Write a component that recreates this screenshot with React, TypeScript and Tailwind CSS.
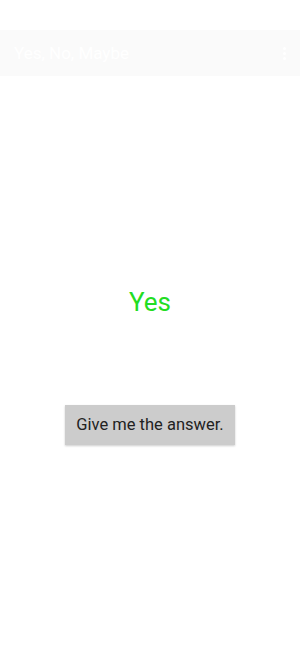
import React from "react";

export default function App() {
  return (
    <div className="w-[300px] h-[650px] bg-white flex flex-col font-['Roboto',sans-serif]">
      {/* status bar space */}
      <div className="h-[30px]" />
      {/* app bar */}
      <div className="h-[46px] bg-[#fafafa] flex items-center justify-between pl-[14px] pr-[14px]">
        <span className="text-white text-[17px] leading-none">Yes, No, Maybe</span>
        <div className="flex flex-col gap-[2px] items-center">
          <span className="w-[3px] h-[3px] rounded-full bg-white" />
          <span className="w-[3px] h-[3px] rounded-full bg-white" />
          <span className="w-[3px] h-[3px] rounded-full bg-white" />
        </div>
      </div>
      <div className="flex flex-col items-center pt-[207px]">
        <span className="text-[26px] leading-[38px] text-[#22dd22]">Yes</span>
        <button className="mt-[84px] w-[170px] h-[40px] bg-[#cccccc] text-[#222222] text-[16.5px] shadow-[0_1px_2px_rgba(0,0,0,0.2)]">
          Give me the answer.
        </button>
      </div>
    </div>
  );
}
